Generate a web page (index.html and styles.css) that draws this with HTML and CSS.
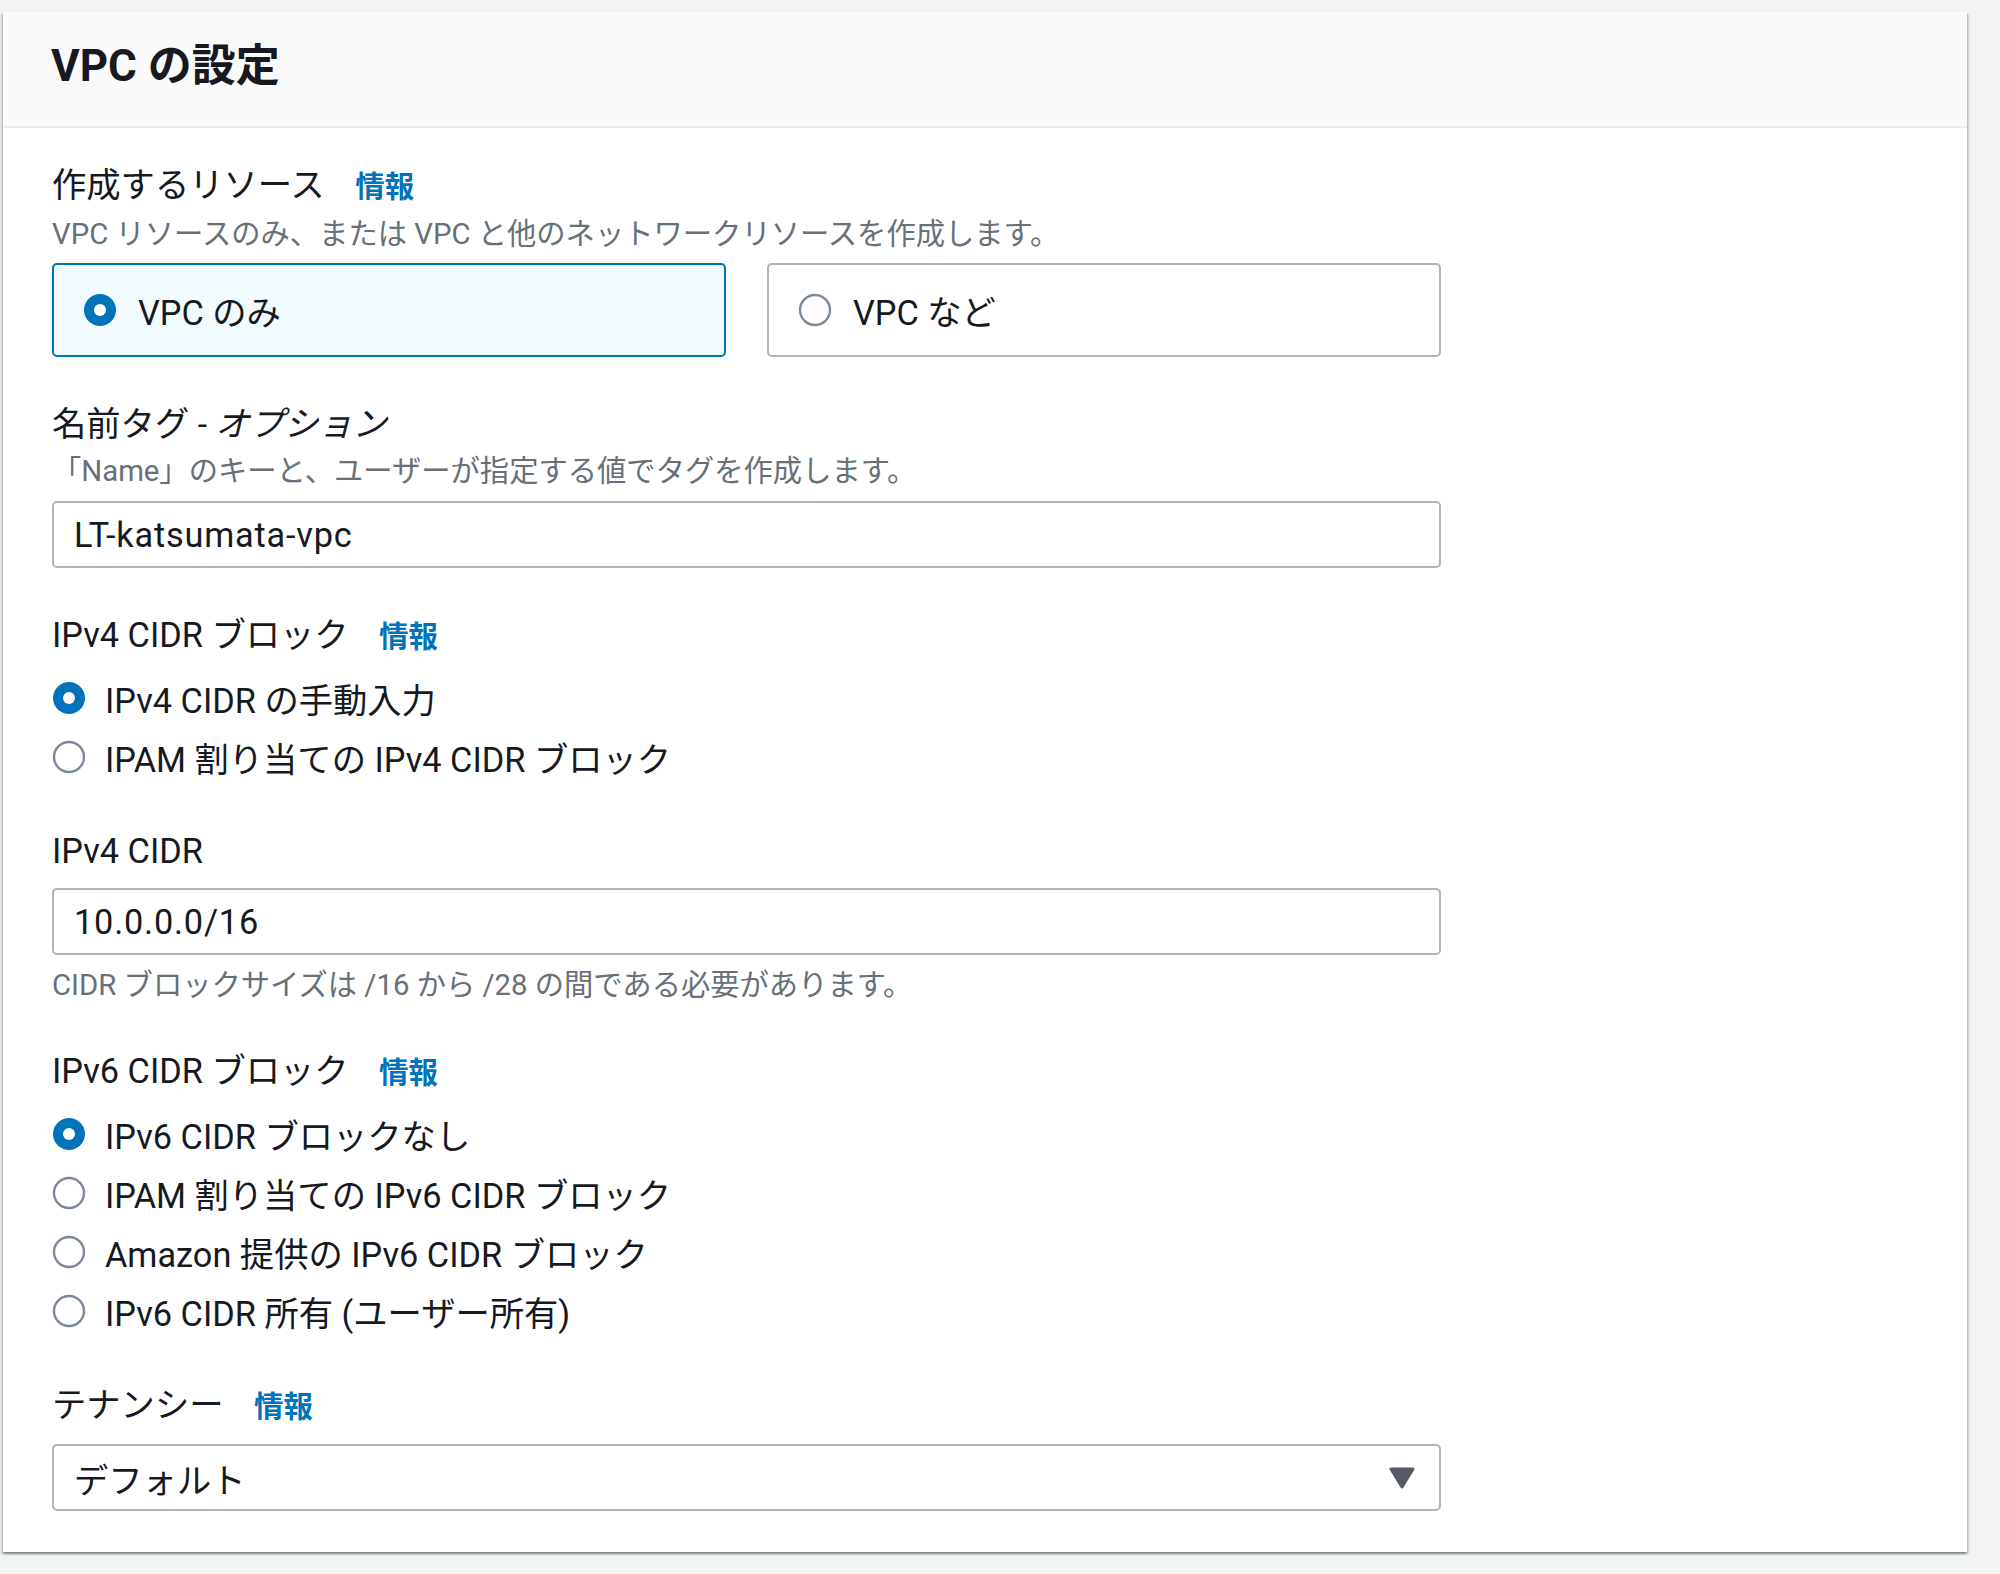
FILE: index.html
```html
<!DOCTYPE html>
<html lang="ja">
<head>
  <meta charset="UTF-8">
  <title>VPC の設定</title>
  <link rel="stylesheet" href="styles.css">
</head>
<body>
  <div class="card">
    <div class="card-header">
      <h2>VPC の設定</h2>
    </div>

    <div class="card-body">
      <!-- 作成するリソース -->
      <div class="field">
        <div class="field-label">作成するリソース <a class="info" href="#">情報</a></div>
        <div class="field-desc">VPC リソースのみ、または VPC と他のネットワークリソースを作成します。</div>
        <div class="tiles">
          <label class="tile selected">
            <svg class="radio" viewBox="0 0 34 34"><circle cx="17" cy="17" r="16" fill="#0073bb"/><circle cx="17" cy="17" r="6" fill="#fff"/></svg>
            <span>VPC のみ</span>
          </label>
          <label class="tile">
            <svg class="radio" viewBox="0 0 34 34"><circle cx="17" cy="17" r="15" fill="#fff" stroke="#7d8998" stroke-width="2.4"/></svg>
            <span>VPC など</span>
          </label>
        </div>
      </div>

      <!-- 名前タグ -->
      <div class="field">
        <div class="field-label">名前タグ <i>- オプション</i></div>
        <div class="field-desc">「Name」のキーと、ユーザーが指定する値でタグを作成します。</div>
        <div class="input after-desc"><span class="value">LT-katsumata-vpc</span></div>
      </div>

      <!-- IPv4 CIDR ブロック -->
      <div class="field">
        <div class="field-label">IPv4 CIDR ブロック <a class="info" href="#">情報</a></div>
        <div class="radio-group">
          <label class="radio-row">
            <svg class="radio" viewBox="0 0 34 34"><circle cx="17" cy="17" r="16" fill="#0073bb"/><circle cx="17" cy="17" r="6" fill="#fff"/></svg>
            <span>IPv4 CIDR の手動入力</span>
          </label>
          <label class="radio-row">
            <svg class="radio" viewBox="0 0 34 34"><circle cx="17" cy="17" r="15" fill="#fff" stroke="#7d8998" stroke-width="2.4"/></svg>
            <span>IPAM 割り当ての IPv4 CIDR ブロック</span>
          </label>
        </div>
      </div>

      <!-- IPv4 CIDR -->
      <div class="field">
        <div class="field-label">IPv4 CIDR</div>
        <div class="input"><span class="value">10.0.0.0/16</span></div>
        <div class="field-hint">CIDR ブロックサイズは /16 から /28 の間である必要があります。</div>
      </div>

      <!-- IPv6 CIDR ブロック -->
      <div class="field">
        <div class="field-label">IPv6 CIDR ブロック <a class="info" href="#">情報</a></div>
        <div class="radio-group">
          <label class="radio-row">
            <svg class="radio" viewBox="0 0 34 34"><circle cx="17" cy="17" r="16" fill="#0073bb"/><circle cx="17" cy="17" r="6" fill="#fff"/></svg>
            <span>IPv6 CIDR ブロックなし</span>
          </label>
          <label class="radio-row">
            <svg class="radio" viewBox="0 0 34 34"><circle cx="17" cy="17" r="15" fill="#fff" stroke="#7d8998" stroke-width="2.4"/></svg>
            <span>IPAM 割り当ての IPv6 CIDR ブロック</span>
          </label>
          <label class="radio-row">
            <svg class="radio" viewBox="0 0 34 34"><circle cx="17" cy="17" r="15" fill="#fff" stroke="#7d8998" stroke-width="2.4"/></svg>
            <span>Amazon 提供の IPv6 CIDR ブロック</span>
          </label>
          <label class="radio-row">
            <svg class="radio" viewBox="0 0 34 34"><circle cx="17" cy="17" r="15" fill="#fff" stroke="#7d8998" stroke-width="2.4"/></svg>
            <span>IPv6 CIDR 所有 (ユーザー所有)</span>
          </label>
        </div>
      </div>

      <!-- テナンシー -->
      <div class="field">
        <div class="field-label">テナンシー <a class="info" href="#">情報</a></div>
        <div class="input select">
          <span>デフォルト</span>
          <svg class="caret" viewBox="0 0 26 22"><path d="M2 2 L24 2 L13 20 Z" fill="#545b64" stroke="#545b64" stroke-width="3" stroke-linejoin="round"/></svg>
        </div>
      </div>
    </div>
  </div>
</body>
</html>
```

FILE: styles.css
```css
* {
  margin: 0;
  padding: 0;
  box-sizing: border-box;
}
body {
  font-family: Roboto, "Noto Sans CJK JP", sans-serif;
  background: #f2f3f3;
  color: #16191f;
  padding: 12px 33px 23px 3px;
}
.card {
  background: #fff;
  box-shadow: 0 2px 2px 0 rgba(0, 28, 36, 0.3), 2px 2px 2px 0 rgba(0, 28, 36, 0.15), -2px 2px 2px 0 rgba(0, 28, 36, 0.15);
}
.card-header {
  background: #fafafa;
  border-bottom: 2px solid #eaeded;
  padding: 30px 48px 36px;
}
.card-header h2 {
  font-size: 44px;
  line-height: 48px;
  font-weight: 700;
}
.card-body {
  padding: 33px 48px 41px 49px;
  display: flex;
  flex-direction: column;
  gap: 43px;
}
.field {
  width: 1389px;
}
.field-label {
  font-size: 34.3px;
  line-height: 48px;
}
.field-label i {
  font-style: italic;
}
.info {
  color: #0073bb;
  font-size: 29.5px;
  font-weight: 700;
  text-decoration: none;
  margin-left: 22px;
}
.field-desc {
  font-size: 29.3px;
  line-height: 38px;
  color: #687078;
  margin-top: 4px;
}
.field-hint {
  font-size: 29.3px;
  line-height: 38px;
  color: #687078;
  margin-top: 11px;
}
.tiles {
  display: grid;
  grid-template-columns: 1fr 1fr;
  gap: 41px;
  margin-top: 10px;
}
.tile {
  display: flex;
  align-items: center;
  gap: 21px;
  height: 94px;
  padding-left: 29px;
  border: 2px solid #aab7b8;
  border-radius: 5px;
  font-size: 34.3px;
}
.tile.selected {
  background: #f1faff;
  border-color: #0073bb;
}
.radio {
  width: 34px;
  height: 34px;
  flex: none;
}
.radio-group {
  display: flex;
  flex-direction: column;
  gap: 11px;
  margin-top: 13px;
  margin-bottom: 3px;
}
.radio-row {
  display: flex;
  align-items: center;
  gap: 19px;
  height: 48px;
  font-size: 34.3px;
}
.input {
  display: flex;
  align-items: center;
  height: 67px;
  padding: 0 24px 0 20px;
  border: 2px solid #aab7b8;
  border-radius: 5px;
  font-size: 34.3px;
  margin-top: 13px;
}
.input .value {
  letter-spacing: 0.8px;
}
.input.after-desc {
  margin-top: 11px;
}
.select {
  justify-content: space-between;
  margin-top: 13px;
}
.caret {
  width: 26px;
  height: 22px;
}
```
